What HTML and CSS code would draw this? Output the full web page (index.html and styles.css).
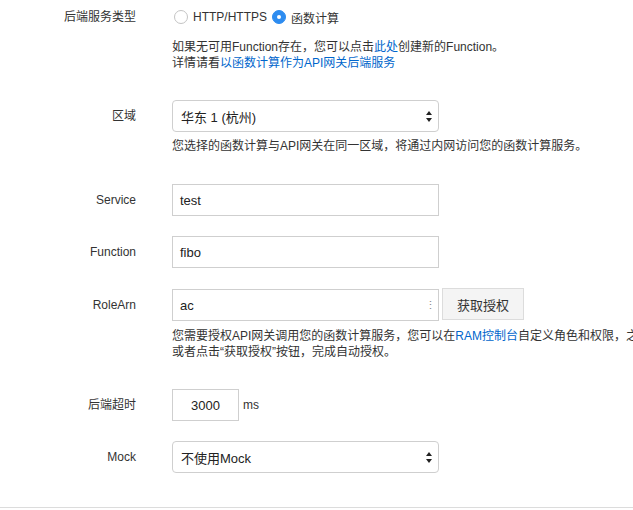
FILE: index.html
```html
<!DOCTYPE html>
<html lang="zh">
<head>
<meta charset="utf-8">
<link rel="stylesheet" href="styles.css">
</head>
<body>
<div class="form">
  <div class="row r-type">
    <div class="label">后端服务类型</div>
    <div class="field">
      <div class="radios">
        <span class="radio"></span><span class="rtext">HTTP/HTTPS</span>
        <span class="radio checked"></span><span class="rtext">函数计算</span>
      </div>
      <div class="help">
        <div>如果无可用Function存在，您可以点击<a class="link">此处</a>创建新的Function。</div>
        <div>详情请看<a class="link">以函数计算作为API网关后端服务</a></div>
      </div>
    </div>
  </div>

  <div class="row r-region">
    <div class="label">区域</div>
    <div class="field">
      <div class="select"><span>华东 1 (杭州)</span><span class="arrows"></span></div>
      <div class="help"><div>您选择的函数计算与API网关在同一区域，将通过内网访问您的函数计算服务。</div></div>
    </div>
  </div>

  <div class="row r-service">
    <div class="label">Service</div>
    <div class="field"><div class="input">test</div></div>
  </div>

  <div class="row r-function">
    <div class="label">Function</div>
    <div class="field"><div class="input">fibo</div></div>
  </div>

  <div class="row r-role">
    <div class="label">RoleArn</div>
    <div class="field">
      <div class="inline">
        <div class="input role">ac<span class="dots">⋮</span></div>
        <div class="button">获取授权</div>
      </div>
      <div class="help">
        <div>您需要授权API网关调用您的函数计算服务，您可以在<a class="link">RAM控制台</a>自定义角色和权限，之后输入RoleArn；</div>
        <div>或者点击“获取授权”按钮，完成自动授权。</div>
      </div>
    </div>
  </div>

  <div class="row r-timeout">
    <div class="label">后端超时</div>
    <div class="field">
      <div class="inline">
        <div class="input short">3000</div>
        <span class="unit">ms</span>
      </div>
    </div>
  </div>

  <div class="row r-mock">
    <div class="label">Mock</div>
    <div class="field">
      <div class="select"><span>不使用Mock</span><span class="arrows"></span></div>
    </div>
  </div>
</div>
<div class="bottom-line"></div>
</body>
</html>
```

FILE: styles.css
```css
html, body {
  margin: 0;
  padding: 0;
  background: #fff;
  overflow: hidden;
}
body {
  width: 633px;
  height: 510px;
  font-family: "Liberation Sans", "Noto Sans CJK SC", sans-serif;
  font-size: 12px;
  color: #333;
  position: relative;
}
.form {
  display: flex;
  flex-direction: column;
  padding-top: 1px;
}
.row {
  display: flex;
  align-items: flex-start;
}
.label {
  width: 136px;
  flex: none;
  text-align: right;
  line-height: 32px;
  color: #333;
}
.field {
  margin-left: 36px;
  display: flex;
  flex-direction: column;
  white-space: nowrap;
}
.radios {
  display: flex;
  align-items: center;
  height: 32px;
}
.radio {
  width: 12px;
  height: 12px;
  border: 1px solid #c4c4c4;
  border-radius: 50%;
  background: #fff;
  margin-left: 2px;
  margin-right: 5px;
  position: relative;
  box-sizing: content-box;
}
.radio.checked {
  background: #2d8cf0;
  border-color: #2d8cf0;
}
.radio.checked::after {
  content: "";
  position: absolute;
  left: 4px;
  top: 4px;
  width: 4px;
  height: 4px;
  border-radius: 50%;
  background: #fff;
}
.rtext {
  font-size: 12px;
  color: #333;
  margin-right: 3px;
}
.help {
  line-height: 16px;
  font-size: 12px;
  color: #333;
  margin-top: 6px;
}
.link {
  color: #0066cc;
  text-decoration: none;
}
.r-region { margin-top: 29px; }
.r-service { margin-top: 30px; }
.r-function { margin-top: 20px; }
.r-role { margin-top: 21px; }
.r-role .help { margin-top: 7px; }
.r-timeout { margin-top: 29px; }
.r-mock { margin-top: 20px; }

.select, .input {
  width: 267px;
  height: 32px;
  box-sizing: border-box;
  border: 1px solid #cfcfcf;
  font-size: 13px;
  color: #222;
  display: flex;
  align-items: center;
  padding-left: 7px;
  background: #fff;
}
.select {
  border-radius: 4px;
  justify-content: space-between;
  padding-left: 8px;
  padding-right: 5px;
}
.arrows {
  width: 7px;
  height: 11px;
  position: relative;
}
.arrows::before, .arrows::after {
  content: "";
  position: absolute;
  left: 0;
  border-left: 3.5px solid transparent;
  border-right: 3.5px solid transparent;
}
.arrows::before {
  top: 0;
  border-bottom: 4px solid #222;
}
.arrows::after {
  bottom: 0;
  border-top: 4px solid #222;
}
.inline {
  display: flex;
  align-items: center;
}
.input.role {
  position: relative;
}
.dots {
  position: absolute;
  right: 2px;
  top: 8px;
  font-size: 11px;
  color: #888;
  line-height: 14px;
}
.button {
  margin-left: 3px;
  width: 82px;
  height: 32px;
  box-sizing: border-box;
  border: 1px solid #dcdcdc;
  background: #f4f4f4;
  color: #333;
  font-size: 13px;
  display: flex;
  align-items: center;
  justify-content: center;
  margin-top: -2px;
}
.input.short {
  width: 67px;
  justify-content: center;
  padding-left: 0;
}
.unit {
  margin-left: 4px;
  font-size: 12px;
  color: #333;
}
.bottom-line {
  position: absolute;
  left: 0;
  right: 0;
  top: 507px;
  height: 1px;
  background: #dcdcdc;
}
```
